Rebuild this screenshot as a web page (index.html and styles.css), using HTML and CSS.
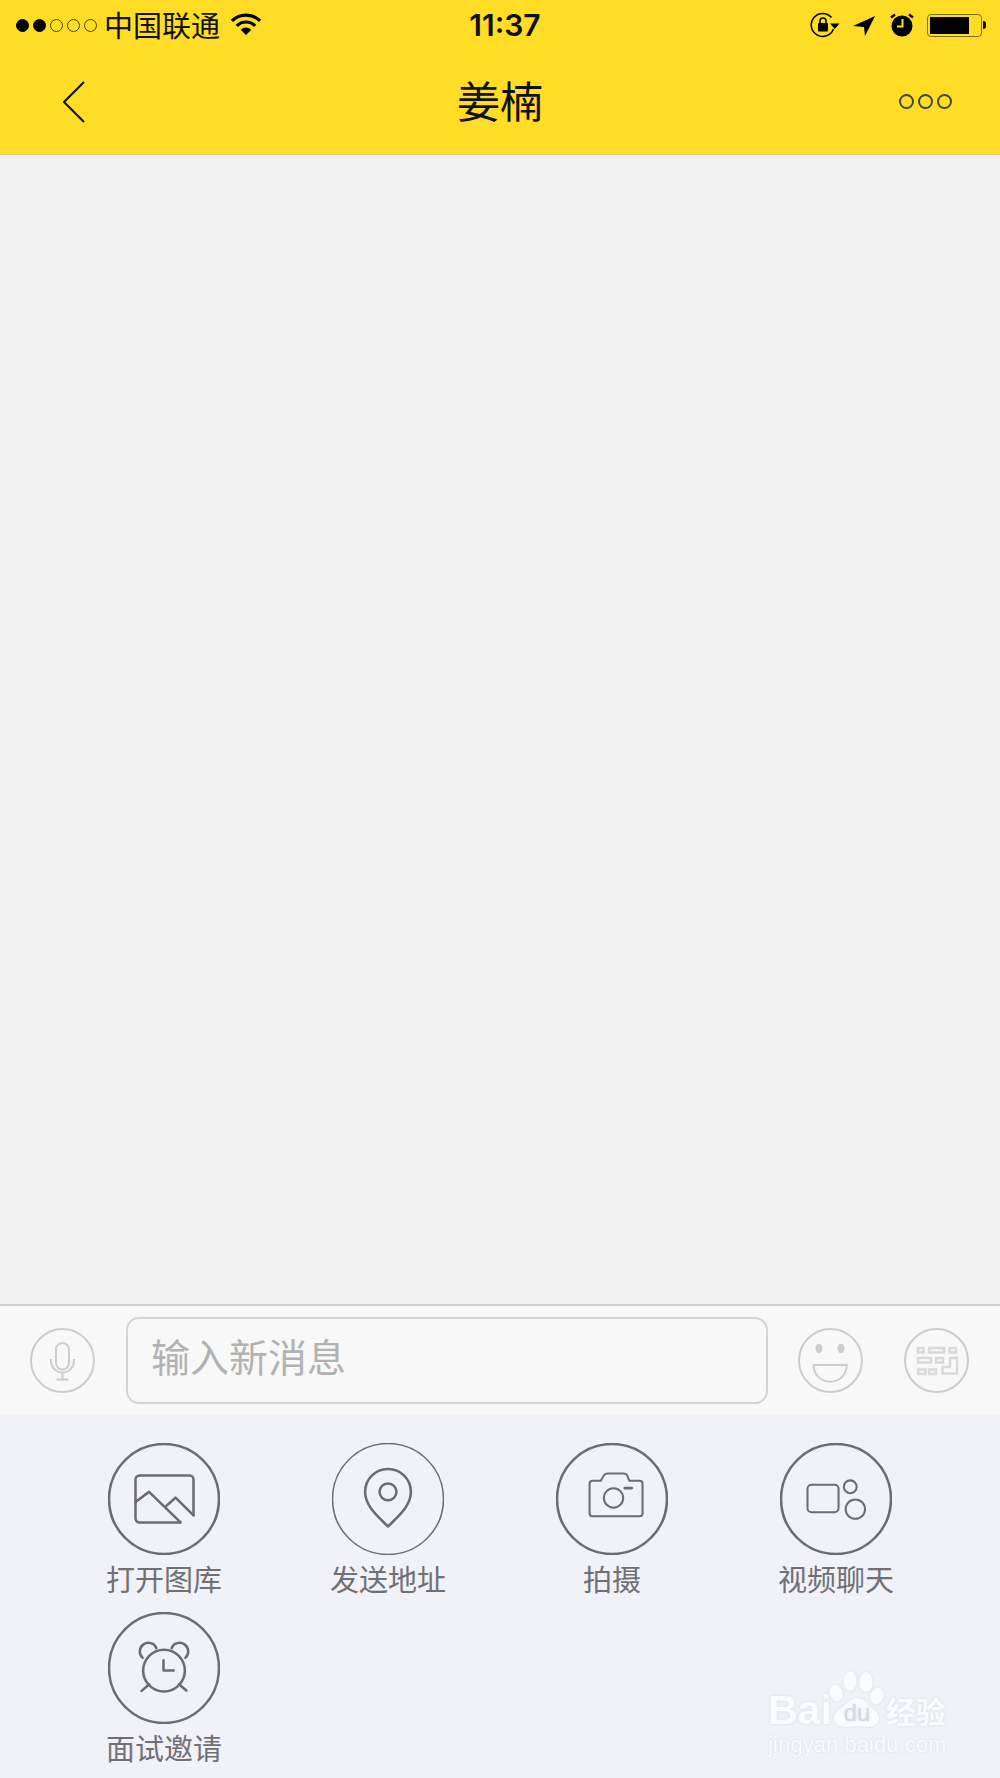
FILE: index.html
```html
<!DOCTYPE html>
<html>
<head>
  <title>姜楠</title>
  <link rel="stylesheet" href="styles.css">
</head>
<body>

<div class="phone">
  <header class="top">
    <div class="status">
      <div class="status-left">
        <span class="signal">
          <i class="dot on"></i><i class="dot on"></i><i class="dot"></i><i class="dot"></i><i class="dot"></i>
        </span>
        <span class="carrier">中国联通</span>
        <svg class="wifi" width="30" height="22" viewBox="0 0 30 22">
          <path d="M.9 7.9a20 20 0 0 1 28.2 0M5.800 12.800a13 13 0 0 1 18.400 0" fill="none" stroke="#000" stroke-width="3.200"/>
          <path d="M15 22L9.700 16.700a7.500 7.500 0 0 1 10.600 0z"/>
        </svg>
      </div>
      <div class="time">11:37</div>
      <div class="status-right">
        <svg width="30" height="26" viewBox="0 0 30 26">
          <path d="M21.500 5.500A11.500 11.500 0 1 0 23.500 17" fill="none" stroke="#000" stroke-width="1.500"/>
          <path d="M20 11.500h9.500l-4.700 5.500z"/>
          <rect x="8" y="11" width="10" height="8.500" rx="1"/>
          <path d="M10 11V9a3 3 0 0 1 6 0v2" fill="none" stroke="#000" stroke-width="1.600"/>
        </svg>
        <svg class="arrow" width="22" height="21" viewBox="0 0 22 21">
          <path d="M0 11L22 1 12 21 11 12z"/>
        </svg>
        <svg class="alarm" width="24" height="24" viewBox="0 0 24 24">
          <circle cx="12" cy="13" r="10.500"/>
          <path d="M1 4.500L5 1.500M23 4.500L19 1.500" stroke="#000" stroke-width="2.400"/>
          <path d="M12.500 6v7.500H7" fill="none" stroke="#ffdd26" stroke-width="2"/>
        </svg>
        <div class="battery"><div class="battery-fill"></div></div>
        <div class="battery-cap"></div>
      </div>
    </div>
    <nav class="nav">
      <svg class="back" width="22" height="42" viewBox="0 0 22 42">
        <path d="M21 1L1 21l20 20" fill="none" stroke="#111" stroke-width="2.200"/>
      </svg>
      <h1 class="title">姜楠</h1>
      <div class="more"><i></i><i></i><i></i></div>
    </nav>
  </header>

  <main class="chat"></main>

  <section class="input-bar">
    <svg class="round" width="65" height="65" viewBox="0 0 65 65">
      <circle cx="32.500" cy="32.500" r="31.500"/>
      <rect x="26" y="15" width="13" height="26.500" rx="6.500"/>
      <path d="M21 31v2a11.500 11.500 0 0 0 23 0v-2M32.500 44.500v7M26.500 51.500h12"/>
    </svg>
    <div class="msg-box">输入新消息</div>
    <svg class="round face" width="65" height="65" viewBox="0 0 65 65">
      <circle cx="32.500" cy="32.500" r="31.500"/>
      <ellipse class="solid" cx="21" cy="20.500" rx="3.500" ry="4.800"/>
      <ellipse class="solid" cx="43" cy="20.500" rx="3.500" ry="4.800"/>
      <path d="M15.500 37h33.300c0 10-7.800 16.700-16.600 16.700S15.500 47 15.500 37z"/>
    </svg>
    <svg class="round keys" width="65" height="65" viewBox="0 0 65 65">
      <circle cx="32.500" cy="32.500" r="31.500"/>
      <g class="key">
        <rect x="14" y="20" width="5.500" height="4.500"/>
        <rect x="25" y="20" width="15" height="4.500"/>
        <rect x="45.500" y="20" width="6.500" height="4.500"/>
        <rect x="14" y="30" width="13" height="4.500"/>
        <rect x="32" y="30" width="7" height="4.500"/>
        <rect x="14" y="41.500" width="7.500" height="4.500"/>
        <rect x="25" y="41.500" width="7" height="4.500"/>
        <path d="M38.500 39H46V30h7v15.500H38.500z"/>
      </g>
    </svg>
  </section>

  <section class="panel">
    <div class="tools">
      <div class="tool">
        <svg class="tool-icon" width="112" height="112" viewBox="0 0 110 110">
          <circle cx="55" cy="55" r="54"/>
          <path d="M71 78H31a4 4 0 0 1-4-4V36a4 4 0 0 1 4-4h49a4 4 0 0 1 4 4v35"/>
          <path d="M27 58l13.300-10 31 30M57 62l9.300-8.300L84 71"/>
        </svg>
        <span>打开图库</span>
      </div>
      <div class="tool">
        <svg class="tool-icon thin" width="112" height="112" viewBox="0 0 110 110">
          <circle cx="55" cy="55" r="54.500"/>
          <path class="fat" d="M55 82C45 72 32.500 62 32.500 48a22.500 22.500 0 0 1 45 0C77.500 62 65 72 55 82z"/>
          <circle class="fat" cx="55" cy="48" r="8.300"/>
        </svg>
        <span>发送地址</span>
      </div>
      <div class="tool">
        <svg class="tool-icon" width="112" height="112" viewBox="0 0 110 110">
          <circle cx="55" cy="55" r="54"/>
          <path class="mid" d="M36 37h8l3-5q1-2 4-2h15q3 0 4 2l2 5h10q3 0 3 3v29q0 3-3 3H36q-3 0-3-3V40q0-3 3-3z"/>
          <circle class="mid" cx="56.500" cy="54" r="9.500"/>
          <path d="M67.500 44.300h7"/>
        </svg>
        <span>拍摄</span>
      </div>
      <div class="tool">
        <svg class="tool-icon" width="112" height="112" viewBox="0 0 110 110">
          <circle cx="55" cy="55" r="54"/>
          <rect class="mid" x="27" y="41" width="30.500" height="27" rx="4"/>
          <circle class="mid" cx="69" cy="43" r="6.300"/>
          <circle class="mid" cx="74" cy="65" r="9.500"/>
        </svg>
        <span>视频聊天</span>
      </div>
      <div class="tool">
        <svg class="tool-icon" width="112" height="112" viewBox="0 0 110 110">
          <circle cx="55" cy="55" r="54"/>
          <circle cx="55" cy="57.500" r="20.500"/>
          <path d="M34 45A8.500 8.500 0 1 1 47.600 35.500M76 45A8.500 8.500 0 1 0 62.400 35.500"/>
          <path d="M33 77.500l7.500-6.500M77 77l-7.300-6M54.500 47.500v10h10"/>
        </svg>
        <span>面试邀请</span>
      </div>
    </div>

    <div class="watermark">
      <div class="wm-top">
        <span class="wm-bai">Bai</span>
        <svg class="wm-paw" width="58" height="60" viewBox="0 0 58 60">
          <ellipse cx="22" cy="12" rx="6.500" ry="10"/>
          <ellipse cx="38" cy="13" rx="6.500" ry="10"/>
          <ellipse cx="8" cy="24" rx="6.500" ry="8.500" transform="rotate(-20 8 24)"/>
          <ellipse cx="49" cy="27" rx="6.500" ry="8.500" transform="rotate(20 49 27)"/>
          <path d="M29 29c7 0 10 6 15 10 6 4 7 8 7 10 0 6-6 9-11 9-4 0-7-1-11-1s-7 1-11 1c-6 0-12-3-12-9 0-3 2-7 8-11 5-3 8-9 15-9z"/>
          <text class="wm-du" x="29" y="52" text-anchor="middle">du</text>
        </svg>
        <span class="wm-jy">经验</span>
      </div>
      <div class="wm-url">jingyan.baidu.com</div>
    </div>
  </section>
</div>

</body>
</html>
```

FILE: styles.css
```css
body {
  margin: 0;
  font-family: "Noto Sans CJK SC", "Liberation Sans", sans-serif;
  background: #f0f0f0;
}

.phone {
  display: flex;
  flex-direction: column;
  height: 1778px;
  width: 1000px;
  overflow: hidden;
}

/* yellow top part */
.top {
  background: #ffdd26;
  border-bottom: 1px solid #d3cba0;
}

.status {
  display: grid;
  grid-template-columns: 1fr auto 1fr;
  align-items: center;
  height: 50px;
}

.status-left {
  display: flex;
  align-items: center;
  padding-left: 16px;
}

.signal {
  display: flex;
  gap: 4px;
}

.dot {
  box-sizing: border-box;
  width: 13px;
  height: 13px;
  border: 1px solid #4a4200;
  border-radius: 50%;
}

.dot.on {
  background: #000;
  border-color: #000;
}

.carrier {
  margin-left: 7px;
  margin-bottom: 2px;
  font-size: 29px;
  line-height: 40px;
  color: #111;
}

.wifi {
  margin-left: 11px;
  margin-top: -2px;
}

.time {
  margin-left: 10px;
  font-family: "Inter", "Liberation Sans", sans-serif;
  font-size: 30px;
  font-weight: 600;
  color: #111;
}

.status-right {
  display: flex;
  align-items: center;
  justify-content: flex-end;
  padding-right: 14px;
}

.arrow {
  margin-left: 13px;
}

.alarm {
  margin-left: 15px;
}

.battery {
  box-sizing: border-box;
  width: 55px;
  height: 23px;
  margin-left: 13px;
  padding: 2px;
  border: 1.500px solid #7a6b10;
  border-radius: 4px;
}

.battery-fill {
  width: 39px;
  height: 100%;
  background: #000;
}

.battery-cap {
  width: 3px;
  height: 8px;
  margin-left: 1px;
  background: #000;
  border-radius: 0 4px 4px 0;
}

.nav {
  display: grid;
  grid-template-columns: 1fr auto 1fr;
  align-items: center;
  height: 104px;
}

.back {
  margin-left: 63px;
}

.title {
  margin: 0 0 7px;
  font-size: 43px;
  font-weight: 400;
  line-height: 90px;
  color: #111;
}

.more {
  display: flex;
  justify-content: flex-end;
  gap: 4px;
  padding-right: 48px;
  margin-bottom: 2px;
}

.more i {
  box-sizing: border-box;
  width: 15px;
  height: 15px;
  border: 2.500px solid #454545;
  border-radius: 50%;
}

.chat {
  flex: 1;
  background: #f0f0f0;
}

/* message input */
.input-bar {
  display: flex;
  align-items: center;
  height: 109px;
  padding: 0 30px;
  background: #f8f8f8;
  border-top: 2px solid #cfcfcf;
}

.round {
  flex: none;
}

.round circle,
.round rect,
.round path,
.round ellipse {
  fill: none;
  stroke: #cdcdcd;
  stroke-width: 2;
}

.round .solid {
  fill: #cdcdcd;
  stroke: none;
}

.round .key rect,
.round .key path {
  stroke: #d9d9d9;
  stroke-width: 2.500;
}

.msg-box {
  box-sizing: border-box;
  width: 642px;
  height: 87px;
  margin: 0 30px 0 31px;
  padding-left: 23px;
  font-size: 39px;
  line-height: 72px;
  color: #b2b2b2;
  border: 2px solid #d4d4d4;
  border-radius: 13px;
}

.keys {
  margin-left: 41px;
}

/* attachment panel */
.panel {
  position: relative;
  height: 363px;
  background: #f0f2f7;
}

.tools {
  display: grid;
  grid-template-columns: repeat(4, 224px);
  row-gap: 14px;
  padding: 28px 52px 0;
}

.tool {
  display: flex;
  flex-direction: column;
  align-items: center;
  font-size: 29px;
  line-height: 40px;
  color: #707074;
}

.tool span {
  margin-top: 3px;
}

.tool-icon circle,
.tool-icon rect,
.tool-icon path {
  fill: none;
  stroke: #6c6c70;
  stroke-width: 2.500;
  stroke-linejoin: round;
  stroke-linecap: round;
}

.tool-icon .mid {
  stroke-width: 2;
}

.thin > circle:first-child {
  stroke-width: 1.500;
}

.tool-icon .fat {
  stroke-width: 2.500;
}

/* baidu watermark */
.watermark {
  position: absolute;
  left: 768px;
  top: 254px;
  width: 180px;
}

.wm-top {
  display: flex;
  align-items: flex-end;
  color: #fafbfd;
  text-shadow: 0 0 3px #d8dbe3;
}

.wm-bai {
  font-family: "Liberation Sans", sans-serif;
  font-size: 41px;
  font-weight: 700;
  line-height: 38px;
}

.wm-paw {
  flex: none;
  margin-left: -4px;
  fill: #fafbfd;
  filter: drop-shadow(0 0 1px #d8dbe3);
}

.wm-du {
  font-family: "Liberation Sans", sans-serif;
  font-size: 24px;
  fill: #d5d8e0;
}

.wm-jy {
  font-size: 30px;
  font-weight: 700;
  line-height: 38px;
}

.wm-url {
  margin-top: 2px;
  font-family: "Liberation Sans", sans-serif;
  font-size: 21.500px;
  line-height: 28px;
  letter-spacing: .3px;
  color: #fafbfd;
  text-shadow: 0 0 2px #d5d8e0;
  white-space: nowrap;
}
```
